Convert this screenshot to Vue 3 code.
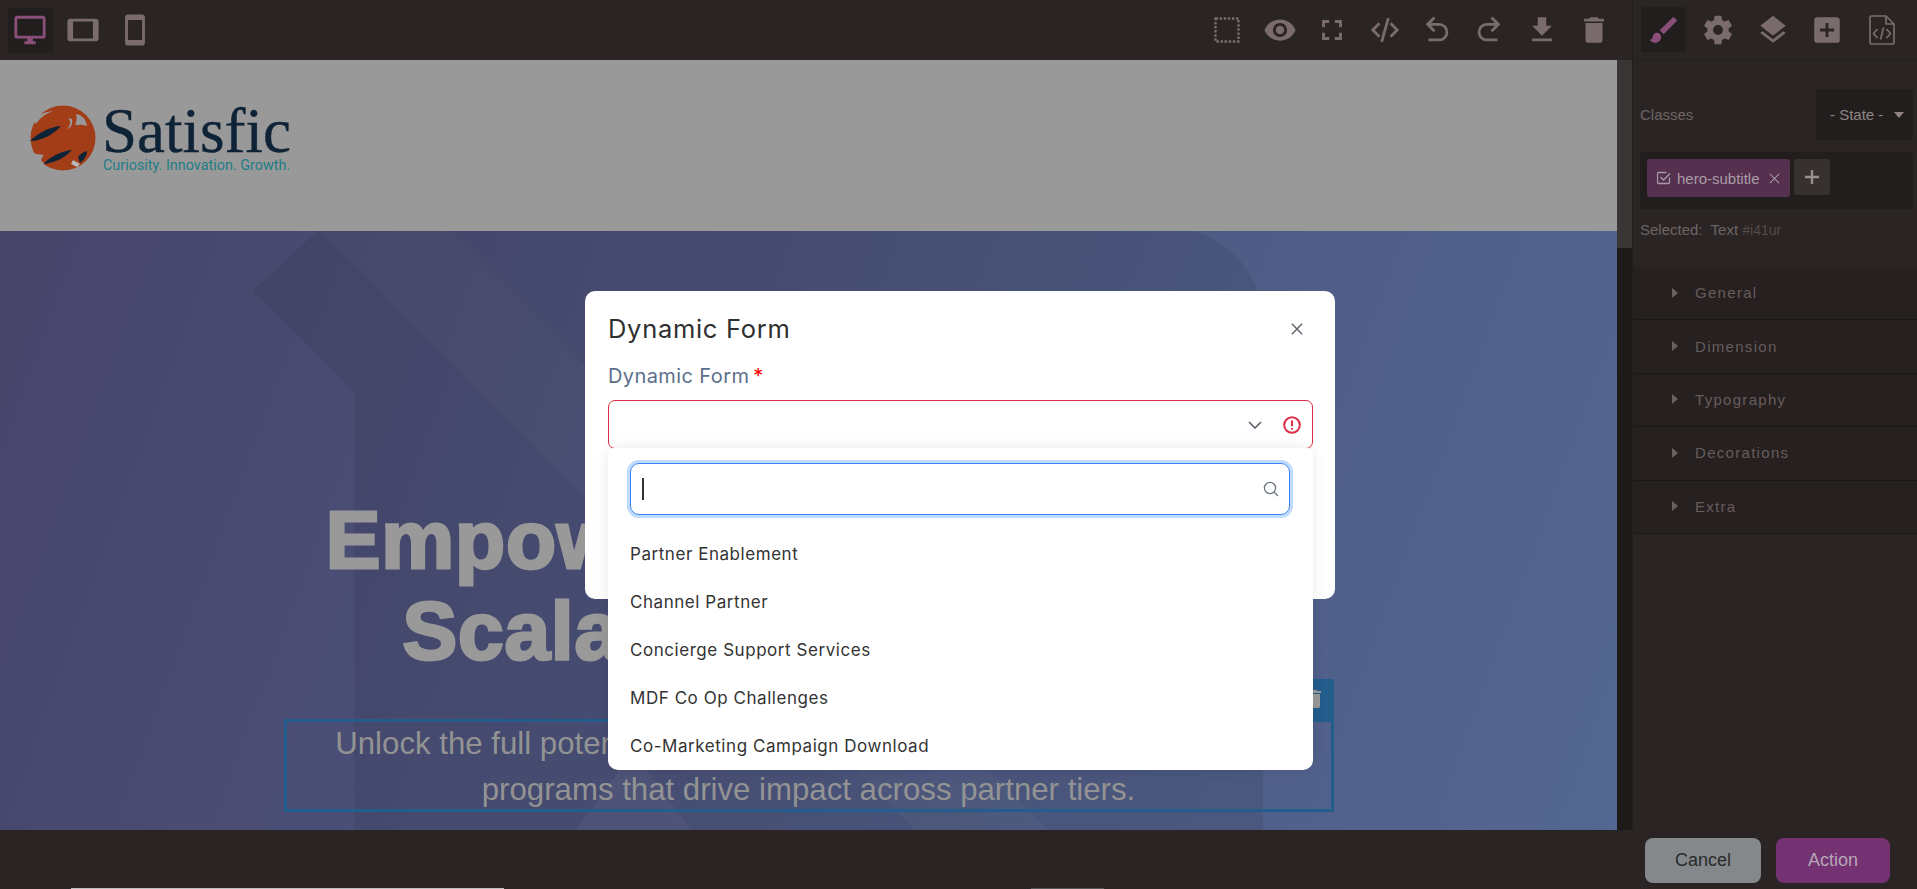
<script setup>
const deviceIcons = [
  { name: 'desktop', active: true, d: 'M21,16H3V4H21M21,2H3C1.89,2 1,2.89 1,4V16A2,2 0 0,0 3,18H10V20H8V22H16V20H14V18H21A2,2 0 0,0 23,16V4C23,2.89 22.1,2 21,2Z' },
  { name: 'tablet', d: 'M19,18H5V6H19M21,4H3C1.89,4 1,4.89 1,6V18A2,2 0 0,0 3,20H21A2,2 0 0,0 23,18V6C23,4.89 22.1,4 21,4Z' },
  { name: 'mobile', d: 'M17,19H7V5H17M17,1H7C5.89,1 5,1.89 5,3V21A2,2 0 0,0 7,23H17A2,2 0 0,0 19,21V3C19,1.89 18.1,1 17,1Z' }
]
const actionIcons = [
  { name: 'eye', d: 'M12,9A3,3 0 0,0 9,12A3,3 0 0,0 12,15A3,3 0 0,0 15,12A3,3 0 0,0 12,9M12,17A5,5 0 0,1 7,12A5,5 0 0,1 12,7A5,5 0 0,1 17,12A5,5 0 0,1 12,17M12,4.5C7,4.5 2.73,7.61 1,12C2.73,16.39 7,19.5 12,19.5C17,19.5 21.27,16.39 23,12C21.27,7.61 17,4.5 12,4.5Z' },
  { name: 'fullscreen', d: 'M5,5H10V7H7V10H5V5M14,5H19V10H17V7H14V5M17,14H19V19H14V17H17V14M10,17V19H5V14H7V17H10Z' },
  { name: 'code', d: 'M10.6,20.6L8.7,20.2L13.4,3.4L15.3,3.8L10.6,20.6M16.6,17.4L15.2,16L19.2,12L15.2,8L16.6,6.6L22,12L16.6,17.4M7.4,17.4L2,12L7.4,6.6L8.8,8L4.8,12L8.8,16L7.4,17.4Z' },
  { name: 'undo', d: 'M13.5,7A6.5,6.5 0 0,1 20,13.5A6.5,6.5 0 0,1 13.5,20H6V18H13.5C16,18 18,16 18,13.5C18,11 16,9 13.5,9H7.83L10.91,12.09L9.5,13.5L4,8L9.5,2.5L10.92,3.91L7.83,7H13.5Z' },
  { name: 'redo', d: 'M10.5,7A6.5,6.5 0 0,0 4,13.5A6.5,6.5 0 0,0 10.5,20H18V18H10.5C8,18 6,16 6,13.5C6,11 8,9 10.5,9H16.17L13.09,12.09L14.5,13.5L20,8L14.5,2.5L13.08,3.91L16.17,7H10.5Z' },
  { name: 'download', d: 'M5,20H19V18H5M19,9H15V3H9V9H5L12,16L19,9Z' },
  { name: 'trash', d: 'M19,4H15.5L14.5,3H9.5L8.5,4H5V6H19M6,19A2,2 0 0,0 8,21H16A2,2 0 0,0 18,19V7H6V19Z' }
]
const panelIcons = [
  { name: 'brush', active: true, d: 'M20.71,4.63L19.37,3.29C19,2.9 18.35,2.9 17.96,3.29L9,12.25L11.75,15L20.71,6.04C21.1,5.65 21.1,5 20.71,4.63M7,14A3,3 0 0,0 4,17C4,18.31 2.84,19 2,19C2.92,20.22 4.5,21 6,21A4,4 0 0,0 10,17A3,3 0 0,0 7,14Z' },
  { name: 'cog', d: 'M12,15.5A3.5,3.5 0 0,1 8.5,12A3.5,3.5 0 0,1 12,8.5A3.5,3.5 0 0,1 15.5,12A3.5,3.5 0 0,1 12,15.5M19.43,12.97C19.47,12.65 19.5,12.33 19.5,12C19.5,11.67 19.47,11.34 19.43,11L21.54,9.37C21.73,9.22 21.78,8.95 21.66,8.73L19.66,5.27C19.54,5.05 19.27,4.96 19.05,5.05L16.56,6.05C16.04,5.66 15.5,5.32 14.87,5.07L14.5,2.42C14.46,2.18 14.25,2 14,2H10C9.75,2 9.54,2.18 9.5,2.42L9.13,5.07C8.5,5.32 7.96,5.66 7.44,6.05L4.95,5.05C4.73,4.96 4.46,5.05 4.34,5.27L2.34,8.73C2.21,8.95 2.27,9.22 2.46,9.37L4.57,11C4.53,11.34 4.5,11.67 4.5,12C4.5,12.33 4.53,12.65 4.57,12.97L2.46,14.63C2.27,14.78 2.21,15.05 2.34,15.27L4.34,18.73C4.46,18.95 4.73,19.03 4.95,18.95L7.44,17.94C7.96,18.34 8.5,18.68 9.13,18.93L9.5,21.58C9.54,21.82 9.75,22 10,22H14C14.25,22 14.46,21.82 14.5,21.58L14.87,18.93C15.5,18.67 16.04,18.34 16.56,17.94L19.05,18.95C19.27,19.03 19.54,18.95 19.66,18.73L21.66,15.27C21.78,15.05 21.73,14.78 21.54,14.63L19.43,12.97Z' },
  { name: 'layers', d: 'M12,16L19.36,10.27L21,9L12,2L3,9L4.63,10.27M12,18.54L4.62,12.81L3,14.07L12,21.07L21,14.07L19.37,12.8L12,18.54Z' },
  { name: 'plus', d: 'M17,13H13V17H11V13H7V11H11V7H13V11H17M19,3H5C3.89,3 3,3.89 3,5V19A2,2 0 0,0 5,21H19A2,2 0 0,0 21,19V5C21,3.89 20.1,3 19,3Z' }
]
const sections = ['General', 'Dimension', 'Typography', 'Decorations', 'Extra']
const options = ['Partner Enablement', 'Channel Partner', 'Concierge Support Services', 'MDF Co Op Challenges', 'Co-Marketing Campaign Download']
</script>

<template>
  <div class="app">
    <div class="main">
      <div class="work">
        <div class="topbar">
          <div class="group">
            <button v-for="i in deviceIcons" :key="i.name" class="tool" :class="{ active: i.active }">
              <svg viewBox="0 0 24 24" class="ico"><path :d="i.d" /></svg>
            </button>
          </div>
          <div class="group">
            <button class="tool">
              <svg viewBox="0 0 26 26" class="dashed"><rect x="1.5" y="1.5" width="23" height="23" /></svg>
            </button>
            <button v-for="i in actionIcons" :key="i.name" class="tool">
              <svg viewBox="0 0 24 24" class="ico"><path :d="i.d" /></svg>
            </button>
          </div>
        </div>
        <div class="viewport">
          <div class="canvas">
            <header class="site-header">
              <svg class="globe" viewBox="0 0 66 66">
                <circle cx="33" cy="33" r="32.500" fill="#a33d17" />
                <path d="M-1 14C3 8 9 3 18 0L-1 -1Z" fill="#999" />
                <path d="M3 15C9 9 15 7 23 6C15 9 10 13 6 19Z" fill="#999" />
                <path d="M46 9C52 10 56 14 57 21C52 19 48 20 45 20C47 16 47 12 46 9Z" fill="#999" />
                <path d="M38 13C41 16 41 20 37 24C41 23 43 19 42 14Z" fill="#999" />
                <path d="M0 36C8 28 19 22 31 21C24 29 12 36 0 36Z" fill="#0f2337" />
                <path d="M13 59C20 52 31 46 42 45C35 53 24 58 13 59Z" fill="#0f2337" />
                <path d="M48 52C51 48 54 47 57 46C57 51 54 55 50 58Z" fill="#0f2337" />
                <path d="M-1 46C3 49 9 49 14 50C11 53 10 56 14 58L12 66H-1Z" fill="#999" />
                <path d="M43 55L50 59L47 62L41 59Z" fill="#b9b9b9" />
                <path d="M66 66H54C60 60 65 52 66 44Z" fill="#999" />
              </svg>
              <div class="brand">
                <div class="brand-name">Satisfic</div>
                <div class="brand-tag">Curiosity. Innovation. Growth.</div>
              </div>
            </header>
            <section class="hero">
              <svg class="hero-bg" viewBox="0 0 1617 599" preserveAspectRatio="none">
                <path d="M317 0L253 60L354 162V599H1263V92C1263 45 1230 10 1193 0Z" fill="#000" fill-opacity="0.075" />
                <path d="M321 0H451L1049 599H915Z" fill="#fff" fill-opacity="0.025" />
                <path d="M576 599L633 521L691 599Z" fill="#fff" fill-opacity="0.04" />
              </svg>
              <h1 class="headline">Empowering Partners to<br />&nbsp;Scalable Enablement</h1>
              <div class="selected-box">
                <div class="sel-toolbar">
                  <svg viewBox="0 0 24 24" class="sel-trash"><path d="M19,4H15.5L14.5,3H9.5L8.5,4H5V6H19M6,19A2,2 0 0,0 8,21H16A2,2 0 0,0 18,19V7H6V19Z" /></svg>
                </div>
                <p class="subtitle">Unlock the full potential of your partners driving scalable, data-driven<br />programs that drive impact across partner tiers.</p>
              </div>
            </section>
          </div>
          <div class="scroll"><div class="thumb"></div></div>
        </div>
      </div>
      <aside class="panel">
        <div class="panel-tabs">
          <button v-for="i in panelIcons" :key="i.name" class="tool narrow" :class="{ active: i.active }">
            <svg viewBox="0 0 24 24" class="ico"><path :d="i.d" /></svg>
          </button>
          <button class="tool narrow">
            <svg viewBox="0 0 26 30" class="filecode">
              <path d="M1 2.5a1.5 1.5 0 0 1 1.5-1.5H17L25 9V27.5A1.5 1.5 0 0 1 23.500 29H2.500A1.500 1.500 0 0 1 1 27.500ZM17 1V9H25" />
              <path d="M8.500 14L4.500 18.500L8.500 23M17.500 14L21.500 18.500L17.500 23M14.500 12.500L11.500 24.500" />
            </svg>
          </button>
        </div>
        <div class="classes-head">
          <span class="muted">Classes</span>
          <div class="state"><span>- State -</span><i class="caret"></i></div>
        </div>
        <div class="classes-box">
          <div class="tag">
            <svg viewBox="0 0 14 14" class="tag-check">
              <path d="M12.500 6.500V11.500A1 1 0 0 1 11.500 12.500H1.500A1 1 0 0 1 .5 11.500V2.500A1 1 0 0 1 1.500 1.500H9.500" />
              <path d="M3.500 6L6.500 9L13 2.500" />
            </svg>
            <span>hero-subtitle</span>
            <svg viewBox="0 0 12 12" class="tag-x"><path d="M1 1L11 11M11 1L1 11" /></svg>
          </div>
          <button class="add">
            <svg viewBox="0 0 16 16"><path d="M8 1V15M1 8H15" /></svg>
          </button>
        </div>
        <div class="selected muted">Selected:&nbsp; Text <span class="sid">#i41ur</span></div>
        <div class="sections">
          <div v-for="s in sections" :key="s" class="sec">
            <i class="tri"></i><span>{{ s }}</span>
          </div>
        </div>
      </aside>
    </div>
    <footer class="footer">
      <button class="btn cancel">Cancel</button>
      <button class="btn action">Action</button>
    </footer>
    <div class="strip one"></div>
    <div class="strip two"></div>

    <div class="overlay">
      <div class="modal">
        <div class="modal-head">
          <h2>Dynamic Form</h2>
          <svg viewBox="0 0 14 14" class="close"><path d="M1 1L13 13M13 1L1 13" /></svg>
        </div>
        <label class="field-label">Dynamic Form<span class="req">*</span></label>
        <div class="select">
          <svg viewBox="0 0 14 8" class="chev"><path d="M1 1L7 7L13 1" /></svg>
          <svg viewBox="0 0 18 18" class="err">
            <circle cx="9" cy="9" r="7.800" />
            <path d="M9 4.500V10.200M9 12V13.500" />
          </svg>
          <div class="dropdown">
            <div class="search">
              <span class="cursor"></span>
              <svg viewBox="0 0 16 16" class="search-ico"><circle cx="7" cy="7" r="5.600" /><path d="M11 11L15 15" /></svg>
            </div>
            <ul class="opts">
              <li v-for="o in options" :key="o">{{ o }}</li>
            </ul>
          </div>
        </div>
      </div>
    </div>
  </div>
</template>

<style>
html, body { margin: 0; background: #2a2424; }
</style>

<style scoped>
.app { position: relative; width: 1917px; height: 889px; overflow: hidden; display: flex; flex-direction: column; background: #2a2424; font-family: "Liberation Sans", Arial, sans-serif; }
.main { flex: 1; display: flex; min-height: 0; }
.work { width: 1632px; display: flex; flex-direction: column; }
.topbar { height: 60px; flex: none; display: flex; justify-content: space-between; align-items: center; padding: 0 11.800px 0 4.300px; box-sizing: border-box; }
.group { display: flex; }
.tool { width: 45px; height: 45px; margin: 0 3.700px; padding: 0; border: 0; background: none; display: flex; align-items: center; justify-content: center; border-radius: 3px; }
.tool.narrow { margin: 0 4.750px; }
.tool.active { background: #231e1e; }
.ico { width: 34px; height: 34px; fill: #7a6c6c; flex: none; }
.tool.active .ico { fill: #8a4f79; }
.dashed { width: 26px; height: 26px; fill: none; stroke: #7a6c6c; stroke-width: 2.400; stroke-dasharray: 2.500 1.600; }
.filecode { width: 26px; height: 30px; fill: none; stroke: #7a6c6c; stroke-width: 1.700; }
.viewport { flex: 1; display: flex; min-height: 0; }
.canvas { width: 1617px; display: flex; flex-direction: column; overflow: hidden; }
.scroll { width: 15px; background: #1f1a1a; }
.thumb { height: 188px; background: #393535; }
.site-header { height: 171px; flex: none; background: #999; display: flex; align-items: flex-start; padding: 45px 0 0 30px; box-sizing: border-box; }
.globe { width: 66px; height: 66px; flex: none; }
.brand { margin-left: 6px; }
.brand-name { font-family: "Liberation Serif", serif; font-size: 63px; line-height: 52px; color: #0f2337; -webkit-text-stroke: .4px #0f2337; }
.brand-tag { margin-top: 2px; margin-left: 1px; font-family: "Roboto", sans-serif; font-size: 14.400px; line-height: 14px; color: #1e7d86; white-space: nowrap; }
.hero { flex: 1; position: relative; background: linear-gradient(110deg, #47446a, #536792); display: flex; flex-direction: column; align-items: center; padding-top: 263px; box-sizing: border-box; }
.hero-bg { position: absolute; inset: 0; width: 100%; height: 100%; }
.headline { position: relative; margin: 0; font-size: 82px; line-height: 91px; font-weight: 700; letter-spacing: .8px; color: #999; text-align: center; white-space: nowrap; -webkit-text-stroke: 3px #999; }
.selected-box { position: relative; width: 1050px; height: 93px; box-sizing: border-box; border: 3px solid #235d8c; margin-top: 43px; }
.sel-toolbar { position: absolute; right: -3px; bottom: 100%; width: 90px; height: 40px; margin-bottom: 3px; background: #235d8c; display: flex; justify-content: flex-end; align-items: center; padding-right: 8px; box-sizing: border-box; }
.sel-trash { width: 24px; height: 24px; fill: #999; }
.subtitle { margin: -1px 0 0; font-size: 31.200px; line-height: 46px; color: #939393; text-align: center; white-space: nowrap; }
.panel { width: 285px; border-left: 1px solid #231e1e; box-sizing: border-box; display: flex; flex-direction: column; }
.panel-tabs { height: 60px; flex: none; display: flex; align-items: center; padding-left: 3.250px; border-bottom: 1px solid #252020; box-sizing: border-box; }
.muted { color: #6e6464; font-size: 15px; }
.classes-head { display: flex; align-items: center; justify-content: space-between; margin-top: 29px; padding: 0 4px 0 7px; }
.state { width: 97px; height: 51px; background: #231e1e; border-radius: 3px; display: flex; align-items: center; padding-left: 14px; box-sizing: border-box; color: #8f8585; font-size: 15px; white-space: nowrap; }
.caret { margin-left: 11px; border: 5px solid transparent; border-top: 6px solid #8f8585; border-bottom: 0; }
.classes-box { margin: 12px 4px 0 7px; height: 57px; background: #231e1e; border-radius: 3px; display: flex; align-items: flex-start; padding: 7px; box-sizing: border-box; }
.tag { width: 143px; height: 38px; border-radius: 3px; background: #55304f; display: flex; align-items: center; padding-left: 10px; box-sizing: border-box; color: #a89ca6; font-size: 15px; white-space: nowrap; }
.tag-check { width: 14px; height: 14px; fill: none; stroke: #a89ca6; stroke-width: 1.300; margin-right: 6px; flex: none; }
.tag-x { width: 11px; height: 11px; fill: none; stroke: #a89ca6; stroke-width: 1.100; margin-left: 9px; flex: none; }
.add { width: 36px; height: 36px; margin-left: 4px; padding: 0; border: 0; border-radius: 2px; background: #363030; display: flex; align-items: center; justify-content: center; }
.add svg { width: 16px; height: 16px; fill: none; stroke: #9a9090; stroke-width: 2.300; }
.selected { margin: 13px 0 0 7px; line-height: 16px; white-space: nowrap; }
.sid { color: #544b4b; font-size: 14px; }
.sections { margin-top: 29px; background: #262020; }
.sec { height: 53.400px; box-sizing: border-box; border-bottom: 1px solid #1d1818; display: flex; align-items: center; padding: 0 0 1px 39px; color: #685c5c; font-size: 15px; letter-spacing: 1.300px; }
.tri { border: 5px solid transparent; border-left: 6px solid #6b5f5f; border-right: 0; margin-right: 17px; }
.footer { height: 59px; flex: none; display: flex; justify-content: flex-end; gap: 15px; padding: 8px 27px 0 0; box-sizing: border-box; }
.btn { height: 45px; border: 0; border-radius: 8px; font-family: "Liberation Sans", sans-serif; font-size: 18px; padding: 0; }
.cancel { width: 116px; background: #84888b; color: #2a2a2a; }
.action { width: 114px; background: #743273; color: #b5a6b4; }
.strip { position: absolute; bottom: 0; height: 1px; }
.strip.one { left: 71px; width: 433px; background: #bdbdbd; }
.strip.two { left: 1031px; width: 73px; background: #555; }
.overlay { position: absolute; inset: 0; padding: 291px 0 0 585px; box-sizing: border-box; }
.modal { width: 750px; height: 308px; background: #fff; border-radius: 10px; padding: 0 22px 0 23px; box-sizing: border-box; font-family: "Inter", sans-serif; }
.modal-head { height: 76px; display: flex; align-items: center; justify-content: space-between; }
.modal-head h2 { margin: 0; font-size: 25.500px; font-weight: 400; letter-spacing: .7px; color: #2f2f2f; line-height: 76px; }
.close { width: 12px; height: 12px; fill: none; stroke: #5f6670; stroke-width: 1.700; margin-right: 10px; }
.field-label { display: block; margin-top: -3px; font-size: 20px; letter-spacing: .4px; line-height: 24px; color: #5b6f8c; }
.req { color: #f00; margin-left: 4px; }
.select { position: relative; height: 49px; margin-top: 12px; box-sizing: border-box; border: 1px solid #dc2e44; border-radius: 7px; display: flex; align-items: center; justify-content: flex-end; padding-right: 11px; }
.chev { width: 14px; height: 8px; fill: none; stroke: #5f6670; stroke-width: 1.700; margin-right: 21px; }
.err { width: 18px; height: 18px; fill: none; stroke: #dc2e44; stroke-width: 2; }
.dropdown { position: absolute; left: -1px; right: -1px; top: 47px; height: 322px; background: #fff; border-radius: 6px 6px 10px 10px; box-shadow: 0 0 14px rgba(0,0,0,.09); box-sizing: border-box; padding: 15px 23px 0 22px; }
.search { position: relative; height: 52px; box-sizing: border-box; border: 1px solid #3b82f6; border-radius: 9px; box-shadow: 0 0 0 3px #bfdbfe; }
.cursor { position: absolute; left: 11px; top: 14px; width: 2px; height: 22px; background: #333; }
.search-ico { position: absolute; right: 10px; top: 17px; width: 16px; height: 16px; fill: none; stroke: #6b7280; stroke-width: 1.300; }
.opts { list-style: none; margin: 15px 0 0; padding: 0; }
.opts li { height: 48px; line-height: 48px; font-size: 17px; letter-spacing: .55px; color: #333; white-space: nowrap; }
</style>
